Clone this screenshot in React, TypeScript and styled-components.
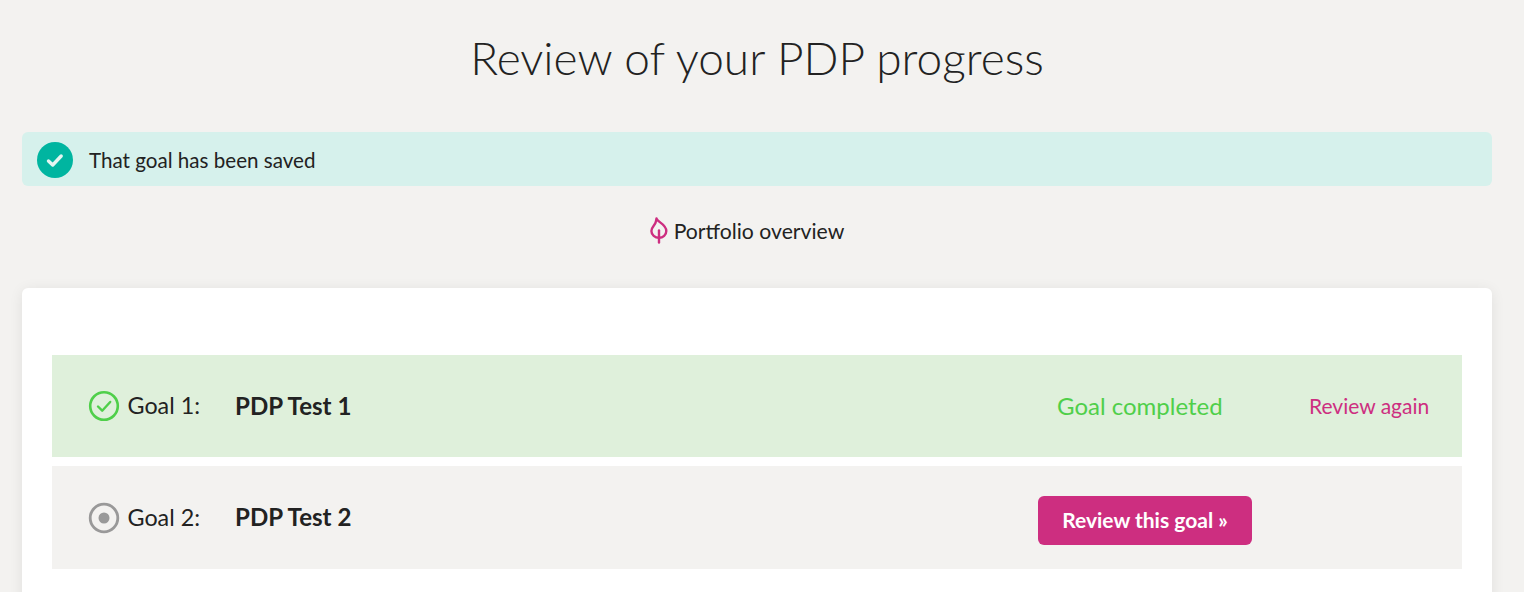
import React from 'react';
import styled, { createGlobalStyle } from 'styled-components';

const GlobalStyle = createGlobalStyle`
  html, body {
    margin: 0;
    height: 100%;
    overflow: hidden;
    background: #f3f2f0;
    color: #222222;
    font-family: Lato, "Open Sans", sans-serif;
  }
`;

const Colors = {
  page: '#f3f2f0',
  pink: '#cd2e80',
  green: '#4fcf4a',
  greenBg: '#dff0db',
  teal: '#00b5a0',
  tealBg: '#d6f1ec',
  grey: '#999999',
};

const App = () => {
  return (
    <Page>
      <GlobalStyle />
      <Title>Review of your PDP progress</Title>
      <Notice>
        <NoticeIcon>
          <svg width="18" height="15" viewBox="0 0 18 15" fill="none">
            <path d="M2.500 8l4.200 4 8.500-9" stroke="#e4f5f1" strokeWidth="3.400" strokeLinecap="round" strokeLinejoin="round" />
          </svg>
        </NoticeIcon>
        <NoticeText>That goal has been saved</NoticeText>
      </Notice>
      <PortfolioLink>
        <svg width="18" height="27" viewBox="0 0 18 27" fill="none">
          <path
            d="M6.500 1.500c.6 3.500 9.800 5.500 9.800 12.500 0 4-3.300 6.800-7.300 6.800s-7.600-2.800-7.600-6.800c0-3.800 2.900-5.300 4-8 .6-1.400.9-3 1.100-4.500z"
            stroke={Colors.pink}
            strokeWidth="2.400"
            strokeLinejoin="round"
          />
          <path d="M9 13.500v12" stroke={Colors.pink} strokeWidth="2.400" strokeLinecap="round" />
        </svg>
        Portfolio overview
      </PortfolioLink>
      <Card>
        <GoalRow done>
          <GoalLabel>
            <svg width="32" height="32" viewBox="0 0 32 32" fill="none">
              <circle cx="16" cy="16" r="13.800" stroke={Colors.green} strokeWidth="2.600" />
              <path d="M10 16.500l4.200 4.200 8-8.700" stroke={Colors.green} strokeWidth="2.400" strokeLinecap="round" strokeLinejoin="round" />
            </svg>
            <GoalNumber>Goal 1:</GoalNumber>
            <GoalName>PDP Test 1</GoalName>
          </GoalLabel>
          <Status>Goal completed</Status>
          <ActionCell>
            <ReviewAgain href="#">Review again</ReviewAgain>
          </ActionCell>
        </GoalRow>
        <GoalRow>
          <GoalLabel>
            <svg width="32" height="32" viewBox="0 0 32 32" fill="none">
              <circle cx="16" cy="16" r="13.800" stroke={Colors.grey} strokeWidth="2.800" />
              <circle cx="16" cy="16" r="5.500" fill={Colors.grey} />
            </svg>
            <GoalNumber>Goal 2:</GoalNumber>
            <GoalName>PDP Test 2</GoalName>
          </GoalLabel>
          <ReviewButton>Review this goal »</ReviewButton>
        </GoalRow>
      </Card>
    </Page>
  );
};

export default App;

const Page = styled.div`
  padding: 0 32px 0 22px;
`;

const Title = styled.h1`
  margin: 0;
  padding-top: 31px;
  height: 132px;
  box-sizing: border-box;
  text-align: center;
  font-size: 46px;
  line-height: 54px;
  font-weight: 300;
  color: #222222;
`;

const Notice = styled.div`
  display: flex;
  align-items: center;
  gap: 16px;
  height: 54px;
  padding-left: 15px;
  border-radius: 6px;
  background: ${Colors.tealBg};
  font-size: 20.600px;
`;

const NoticeText = styled.span`
  padding-top: 2px;
`;

const NoticeIcon = styled.span`
  display: flex;
  align-items: center;
  justify-content: center;
  width: 36px;
  height: 36px;
  margin-top: 2px;
  border-radius: 50%;
  background: ${Colors.teal};
`;

const PortfolioLink = styled.div`
  display: flex;
  align-items: center;
  justify-content: center;
  gap: 6px;
  height: 102px;
  box-sizing: border-box;
  padding: 0 20px 13px 0;
  font-size: 21.200px;
`;

const Card = styled.div`
  display: flex;
  flex-direction: column;
  gap: 9px;
  padding: 67px 30px 40px;
  border-radius: 6px;
  background: #ffffff;
  box-shadow: 0 2px 14px rgba(0, 0, 0, 0.08);
`;

const GoalRow = styled.div<{ done?: boolean }>`
  display: flex;
  align-items: center;
  height: ${(p) => (p.done ? '102px' : '103px')};
  padding-left: 36px;
  background: ${(p) => (p.done ? Colors.greenBg : Colors.page)};
`;

const GoalLabel = styled.div`
  display: flex;
  align-items: center;
  width: 950px;
  font-size: 23.300px;
`;

const GoalNumber = styled.span`
  width: 107.500px;
  margin: 0 0 2px 7.500px;
`;

const GoalName = styled.span`
  margin-bottom: 2px;
  font-size: 24.100px;
  font-weight: 700;
`;

const Status = styled.span`
  width: 252px;
  margin: 0 0 2px 19px;
  color: ${Colors.green};
  font-size: 24px;
`;

const ActionCell = styled.div`
  display: flex;
  margin-bottom: 2px;
`;

const ReviewAgain = styled.a`
  color: ${Colors.pink};
  font-size: 21px;
  text-decoration: none;
`;

const ReviewButton = styled.button`
  width: 214px;
  height: 49px;
  margin-top: 5px;
  padding: 0 0 2px;
  border: 0;
  border-radius: 6px;
  background: ${Colors.pink};
  color: #ffffff;
  font-family: inherit;
  font-size: 21px;
  font-weight: 700;
`;
